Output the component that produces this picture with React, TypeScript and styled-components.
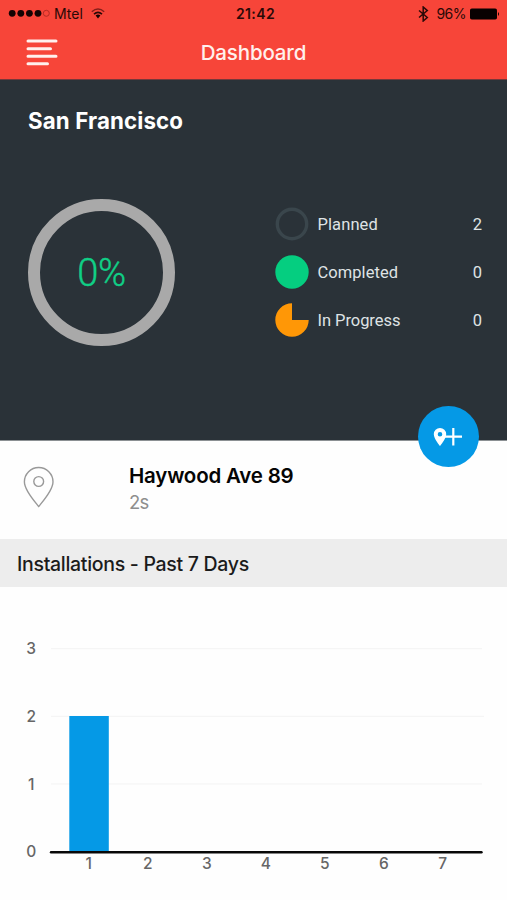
import React from "react";
import styled, { createGlobalStyle } from "styled-components";

const GlobalStyle = createGlobalStyle`
  *, *::before, *::after { box-sizing: border-box; }
  body { margin: 0; background: #fefefe; font-family: Inter, "Liberation Sans", sans-serif; }
  svg { display: block; flex: none; }
`;

const Screen = styled.main`
  width: 507px;
  height: 900px;
  display: flex;
  flex-direction: column;
  overflow: hidden;
  background: #fefefe;
`;

const Header = styled.header`
  height: 80px;
  flex: none;
  background: #f74539;
  border-bottom: 1px solid #77383a;
`;

const StatusBar = styled.div`
  height: 27px;
  padding: 0 7px 0 8px;
  display: grid;
  grid-template-columns: 1fr auto 1fr;
  align-items: center;
  color: #2a0907;
  font-size: 14px;
  line-height: 27px;
`;

const StatusGroup = styled.div<{ $end?: boolean }>`
  display: flex;
  align-items: center;
  justify-content: ${(p) => (p.$end ? "flex-end" : "flex-start")};
`;

const Carrier = styled.span`
  margin: 0 8px 0 4px;
`;

const Clock = styled.span`
  margin-left: 3px;
  font-weight: 600;
  letter-spacing: 0.4px;
`;

const Battery = styled.span`
  margin: 0 4px 0 7px;
  letter-spacing: -0.5px;
`;

const NavBar = styled.div`
  height: 50px;
  padding: 0 26px;
  display: grid;
  grid-template-columns: 32px 1fr 32px;
  align-items: center;
`;

const MenuButton = styled.button`
  padding: 0;
  border: 0;
  background: none;
`;

const NavTitle = styled.h1`
  margin: 0;
  text-align: center;
  color: #fff0ed;
  font-size: 20.5px;
  font-weight: 500;
  line-height: 52px;
  letter-spacing: -0.15px;
`;

const Summary = styled.section`
  position: relative;
  height: 361px;
  flex: none;
  padding: 27px 25px 0 28px;
  background: #2a3238;
  border-bottom: 1px solid #8b9093;
  color: #fff;
`;

const City = styled.h2`
  margin: 0;
  font-size: 22.3px;
  line-height: 28px;
  font-weight: 650;
  letter-spacing: 0.13px;
`;

const Stats = styled.div`
  margin-top: 63.5px;
  display: flex;
  justify-content: space-between;
`;

const Gauge = styled.div`
  width: 147px;
  height: 147px;
  padding-top: 2px;
  border: 12.5px solid #a9a9a9;
  border-radius: 50%;
  display: flex;
  align-items: center;
  justify-content: center;
  color: #10cf86;
  font-family: Roboto, sans-serif;
  font-size: 38px;
  font-weight: 300;
  letter-spacing: -0.4px;
  -webkit-text-stroke: 0.4px #10cf86;
`;

const Legend = styled.ul`
  width: 207.5px;
  margin: 1.5px 0 0;
  padding: 0;
  list-style: none;
`;

const LegendRow = styled.li`
  height: 48px;
  display: grid;
  grid-template-columns: 34px 1fr auto;
  column-gap: 9px;
  align-items: center;
  color: #dfe3e5;
  font-family: Roboto, sans-serif;
  font-size: 16.5px;
`;

const LegendLabel = styled.span<{ $spacing: number }>`
  letter-spacing: ${(p) => p.$spacing}px;
  white-space: nowrap;
`;

const AddButton = styled.button`
  position: absolute;
  right: 28px;
  bottom: -27px;
  width: 61px;
  height: 61px;
  padding: 0;
  border: 0;
  border-radius: 50%;
  background: #0599e6;
  display: flex;
  align-items: center;
  justify-content: center;
`;

const Place = styled.article`
  height: 98px;
  flex: none;
  padding: 21px 23px 0;
  display: grid;
  grid-template-columns: 32px 1fr;
  column-gap: 74px;
  align-items: start;
`;

const PlaceName = styled.h3`
  margin: 0;
  color: #050505;
  font-size: 20.5px;
  line-height: 28px;
  font-weight: 600;
  letter-spacing: -0.2px;
`;

const PlaceAge = styled.p`
  margin: 0;
  color: #8e8e8e;
  font-size: 18.5px;
  line-height: 25px;
  letter-spacing: -0.8px;
`;

const SectionTitle = styled.h3`
  height: 48px;
  flex: none;
  margin: 0;
  padding: 0 17px;
  background: #ededed;
  color: #1b1b1b;
  font-size: 19.5px;
  line-height: 50px;
  font-weight: 500;
  letter-spacing: -0.3px;
`;

const ChartLabel = styled.text`
  fill: #666;
  font: 500 15.5px Inter, sans-serif;
  text-anchor: middle;
`;

const statuses = [
  { kind: "planned", label: "Planned", count: 2, spacing: 0.1 },
  { kind: "completed", label: "Completed", count: 0, spacing: 0.05 },
  { kind: "progress", label: "In Progress", count: 0, spacing: -0.05 },
];

const days = [2, 0, 0, 0, 0, 0, 0];

function StatusIcon({ kind }: { kind: string }) {
  return (
    <svg width="34" height="34" viewBox="0 0 34 34">
      {kind === "planned" && <circle cx="17" cy="17" r="14.7" fill="none" stroke="#3a464c" strokeWidth="3.4" />}
      {kind === "completed" && <circle cx="17" cy="17" r="16.7" fill="#05ce80" />}
      {kind === "progress" && <path d="M17 17V.3A16.7 16.7 0 1 0 33.7 17Z" fill="#ff9706" />}
    </svg>
  );
}

function Chart() {
  const base = 265;
  const unit = 67.6;
  return (
    <svg width="507" height="313" viewBox="0 0 507 313">
      {[3, 2, 1].map((n) => (
        <path key={n} d={`M51 ${base - n * unit - 0.5}H${n === 2 ? 484 : 482}`} stroke="#f3f3f3" />
      ))}
      {[3, 2, 1, 0].map((n) => (
        <ChartLabel key={n} x="31.2" y={base - n * unit + 5.2}>{n}</ChartLabel>
      ))}
      {days.map((value, i) => (
        <g key={i}>
          {value > 0 && <rect x={69.3 + i * 59} y={base - value * unit - 0.8} width="39.5" height={value * unit} fill="#0599e6" />}
          <ChartLabel x={88.8 + i * 59} y={base + 17}>{i + 1}</ChartLabel>
        </g>
      ))}
      <path d="M51 265.2H481.5" stroke="#080808" strokeWidth="2.4" strokeLinecap="round" />
    </svg>
  );
}

export default function App() {
  return (
    <>
      <GlobalStyle />
      <Screen>
        <Header>
          <StatusBar>
            <StatusGroup>
              <svg width="42" height="9" viewBox="0 0 42 9">
                {[4.2, 12.8, 21.4, 30].map((x) => <circle key={x} cx={x} cy="4.3" r="3.4" fill="#140303" />)}
                <circle cx="38.3" cy="4.3" r="3" fill="none" stroke="#b52b24" />
              </svg>
              <Carrier>Mtel</Carrier>
              <svg width="14" height="11" viewBox="0 0 14 11" fill="none">
                <path d="M.8 3.7Q7-1.6 13.2 3.7" stroke="#851f1a" strokeWidth="1.5" />
                <path d="M3 6.1Q7 2.6 11 6.1" stroke="#2a0907" strokeWidth="1.6" />
                <path d="M4.6 7.6Q7 5.6 9.4 7.6L7 10.4Z" fill="#140303" />
              </svg>
            </StatusGroup>
            <Clock>21:42</Clock>
            <StatusGroup $end>
              <svg width="11" height="16" viewBox="0 0 11 16">
                <path d="M1 4.5 9.3 11.5 5.2 15V1L9.3 4.6 1 11.5" fill="none" stroke="#2a0907" strokeWidth="1.5" />
              </svg>
              <Battery>96%</Battery>
              <svg width="30" height="12" viewBox="0 0 30 12">
                <rect x="0" y=".5" width="27" height="11" rx="1.8" fill="#080101" />
                <path d="M28 4Q30 6 28 8Z" fill="#080101" />
              </svg>
            </StatusGroup>
          </StatusBar>
          <NavBar>
            <MenuButton aria-label="Menu">
              <svg width="32" height="28" viewBox="0 0 32 28">
                <path d="M2 2H30M2 9.7H24.5M2 17.3H30M2 24.8H21.5" stroke="#fff0ed" strokeWidth="3" strokeLinecap="round" />
              </svg>
            </MenuButton>
            <NavTitle>Dashboard</NavTitle>
          </NavBar>
        </Header>
        <Summary>
          <City>San Francisco</City>
          <Stats>
            <Gauge>0%</Gauge>
            <Legend>
              {statuses.map((s) => (
                <LegendRow key={s.kind}>
                  <StatusIcon kind={s.kind} />
                  <LegendLabel $spacing={s.spacing}>{s.label}</LegendLabel>
                  <span>{s.count}</span>
                </LegendRow>
              ))}
            </Legend>
          </Stats>
          <AddButton aria-label="Add place">
            <svg width="31" height="22" viewBox="0 0 31 22">
              <path fillRule="evenodd" fill="#fff" d="M7 2a6.2 6.2 0 0 0-6.2 6.2C.8 12.8 7 20 7 20s6.2-7.2 6.2-11.8A6.2 6.2 0 0 0 7 2Zm0 4a2.3 2.3 0 1 1 0 4.6A2.3 2.3 0 0 1 7 6Z" />
              <path d="M12 10.7H29M20.3 2V19.5" stroke="#fff" strokeWidth="2.2" />
            </svg>
          </AddButton>
        </Summary>
        <Place>
          <svg width="32" height="46" viewBox="0 0 32 46">
            <path d="M15.7 44.5C12.5 40.5 1.4 28.5 1.4 19.8A14.3 14.3 0 0 1 30 19.8C30 28.5 18.9 40.5 15.7 44.5Z" fill="none" stroke="#999" strokeWidth="1.4" />
            <circle cx="15.7" cy="19.5" r="4.9" fill="none" stroke="#999" strokeWidth="1.4" />
          </svg>
          <div>
            <PlaceName>Haywood Ave 89</PlaceName>
            <PlaceAge>2s</PlaceAge>
          </div>
        </Place>
        <SectionTitle>Installations - Past 7 Days</SectionTitle>
        <Chart />
      </Screen>
    </>
  );
}
